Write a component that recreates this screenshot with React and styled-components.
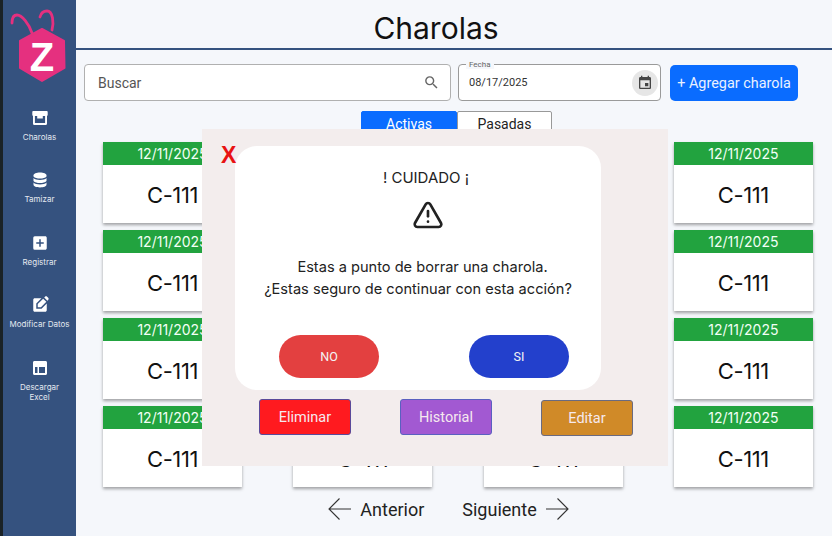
import React from "react";
import styled, { createGlobalStyle } from "styled-components";
import { MdSearch, MdEvent, MdAddBox, MdEditSquare } from "react-icons/md";
import { TriangleAlert } from "lucide-react";

const GlobalStyle = createGlobalStyle`
  html, body {
    margin: 0;
    height: 100%;
    overflow: hidden;
    background: #f5f7fb;
    font-family: "Roboto", "Liberation Sans", sans-serif;
  }
  * { box-sizing: border-box; }
`;

const Page = styled.div`
  position: relative;
  display: flex;
  width: 832px;
  height: 536px;
  overflow: hidden;
`;

const Sidebar = styled.aside`
  width: 76px;
  flex: none;
  display: flex;
  flex-direction: column;
  align-items: center;
  background: #35527f;
  border-left: 3px solid #1a2226;
  padding-top: 9px;
`;

const LogoBox = styled.svg`
  width: 76px;
  height: 76px;
  margin-left: -3px;
  flex: none;
`;

const NavList = styled.nav`
  display: flex;
  flex-direction: column;
  margin-top: 24px;
  width: 100%;
`;

const NavItem = styled.div`
  height: 62.4px;
  display: flex;
  flex-direction: column;
  align-items: center;
  color: #fff;
  svg { flex: none; }
`;

const NavLabel = styled.span`
  margin-top: 5px;
  font-family: "Inter", sans-serif;
  font-size: 8px;
  line-height: 10.5px;
  text-align: center;
  color: #e4e9f0;
`;

const Main = styled.main`
  flex: 1;
  display: flex;
  flex-direction: column;
  min-width: 0;
`;

const Title = styled.h1`
  margin: 0;
  height: 50px;
  padding: 9px 36px 0 0;
  border-bottom: 2px solid #35527f;
  font-family: "Inter", sans-serif;
  font-size: 30px;
  line-height: 38px;
  font-weight: 400;
  text-align: center;
  color: #111;
`;

const Toolbar = styled.div`
  display: flex;
  gap: 7px;
  padding: 14px 0 0 8px;
  align-items: flex-start;
`;

const SearchField = styled.div`
  width: 367px;
  height: 37px;
  display: flex;
  align-items: center;
  justify-content: space-between;
  padding: 0 10px 0 13px;
  background: #fff;
  border: 1px solid #b0b0b0;
  border-radius: 4px;
  font-size: 14px;
  color: #555;
  svg { color: #666; }
`;

const DateField = styled.div`
  position: relative;
  width: 203px;
  height: 37px;
  display: flex;
  align-items: center;
  justify-content: space-between;
  padding: 0 2px 0 10px;
  border: 1px solid #9a9a9a;
  border-radius: 4px;
  background: #fff;
  font-size: 11px;
  color: #333;
`;

const DateLegend = styled.span`
  position: absolute;
  top: -5px;
  left: 7px;
  padding: 0 3px;
  background: #f5f7fb;
  font-size: 8px;
  line-height: 9px;
  color: #666;
`;

const CalendarButton = styled.span`
  width: 26px;
  height: 26px;
  display: flex;
  align-items: center;
  justify-content: center;
  border-radius: 50%;
  background: #e6e6e6;
  color: #444;
`;

const AddButton = styled.button`
  width: 128px;
  height: 36px;
  margin: 1px 0 0 2px;
  padding: 0;
  border: none;
  border-radius: 5px;
  background: #0a6cff;
  color: #e9f1ff;
  font-family: inherit;
  font-size: 14.4px;
`;

const Tabs = styled.div`
  display: flex;
  margin: 10px 0 0 285px;
`;

const Tab = styled.button`
  width: ${(p) => (p.$active ? 96 : 95)}px;
  height: 30px;
  padding: 0 0 4px;
  border: 1px solid ${(p) => (p.$active ? "#0a6cff" : "#999")};
  border-radius: 2px 2px 0 0;
  background: ${(p) => (p.$active ? "#0a6cff" : "#fff")};
  color: ${(p) => (p.$active ? "#fff" : "#222")};
  font-family: inherit;
  font-size: 14px;
`;

const CardGrid = styled.div`
  display: grid;
  grid-template-columns: repeat(4, 139px);
  grid-auto-rows: 81px;
  column-gap: 51.3px;
  row-gap: 7px;
  margin: 1px 0 0 27px;
`;

const Card = styled.div`
  display: flex;
  flex-direction: column;
  background: #fff;
  box-shadow: 0 2px 3px rgba(0, 0, 0, 0.35);
`;

const CardDate = styled.div`
  height: 23px;
  background: #22a33f;
  color: #f2fff5;
  font-family: "Inter", sans-serif;
  font-size: 14px;
  line-height: 23px;
  text-align: center;
`;

const CardCode = styled.div`
  flex: 1;
  display: flex;
  align-items: center;
  justify-content: center;
  padding-top: 2px;
  font-family: "Inter", sans-serif;
  font-size: 22px;
  letter-spacing: -0.4px;
  color: #111;
`;

const Pager = styled.div`
  display: flex;
  justify-content: center;
  align-items: center;
  gap: 38px;
  margin: 10px 0 0 -11px;
  font-size: 18px;
  color: #222;
`;

const PagerLink = styled.span`
  display: flex;
  align-items: center;
  gap: 8px;
`;

const Overlay = styled.div`
  position: absolute;
  left: 202px;
  top: 129px;
  width: 466px;
  height: 337px;
  padding: 17px 0 0 33px;
  background: #f3eded;
`;

const CloseMark = styled.span`
  position: absolute;
  left: 19px;
  top: 12px;
  font-family: "Liberation Sans", sans-serif;
  font-size: 23px;
  font-weight: 700;
  line-height: 28px;
  color: #e81212;
`;

const Dialog = styled.div`
  width: 366px;
  height: 244px;
  display: flex;
  flex-direction: column;
  align-items: center;
  padding-top: 23px;
  background: #fff;
  border-radius: 22px;
  font-family: "Inter", sans-serif;
  color: #222;
`;

const DialogTitle = styled.div`
  margin-left: 16px;
  font-size: 15px;
  line-height: 18px;
`;

const DialogIcon = styled(TriangleAlert)`
  margin: 12px 0 0 20px;
`;

const DialogText = styled.p`
  margin: 25px 0 0;
  font-size: 14.6px;
  line-height: 22px;
  text-align: center;
`;

const LeadLine = styled.span`
  padding-left: 9px;
`;

const DialogActions = styled.div`
  display: flex;
  gap: 90px;
  margin: 35px 0 0 12px;
`;

const PillButton = styled.button`
  width: 100px;
  height: 43px;
  border: none;
  border-radius: 22px;
  background: ${(p) => p.$bg};
  color: #f4f4f4;
  font-family: "Roboto", sans-serif;
  font-size: 12.5px;
`;

const ActionRow = styled.div`
  display: flex;
  gap: 49px;
  margin: 9px 0 0 24px;
`;

const ActionButton = styled.button`
  width: 92px;
  height: 36px;
  margin-top: ${(p) => p.$drop || 0}px;
  padding: 0;
  border: 1px solid ${(p) => p.$border};
  border-radius: 3px;
  background: ${(p) => p.$bg};
  color: #f6e9ee;
  font-family: "Roboto", sans-serif;
  font-size: 14.5px;
`;

const ArchiveIcon = () => (
  <svg width="18" height="18" viewBox="0 0 18 18" fill="currentColor">
    <path fillRule="evenodd" d="M2.500 2h13c.8 0 1.200.6 1.200 1.200v2.600c0 .6-.3 1-.7 1.200v7.500c0 1-.8 1.500-1.600 1.500H3.600C2.800 16 2 15.500 2 14.500V7c-.4-.2-.7-.6-.7-1.200V3.200C1.300 2.600 1.700 2 2.500 2zM3.900 7v6.900h10.200V7h-2.300v2.600H6.200V7z" />
  </svg>
);

const DatabaseIcon = () => (
  <svg width="18" height="18" viewBox="0 0 18 18" fill="currentColor">
    <path d="M9 1.500c3.600 0 6.500 1.100 6.500 2.900v1.100C14.300 7 11.700 7.500 9 7.500s-5.300-.5-6.500-2V4.400C2.500 2.600 5.400 1.500 9 1.500z" />
    <path d="M2.500 7C3.800 8.400 6.300 8.900 9 8.900s5.200-.5 6.500-1.900v3.100C14.300 11.600 11.700 12.100 9 12.100s-5.300-.5-6.500-2z" />
    <path d="M2.500 11.600c1.300 1.400 3.800 1.900 6.500 1.900s5.200-.5 6.500-1.900v2c0 1.800-2.900 2.900-6.500 2.900s-6.500-1.100-6.500-2.900z" />
  </svg>
);

const LayoutIcon = () => (
  <svg width="18" height="18" viewBox="0 0 18 18" fill="currentColor">
    <path fillRule="evenodd" d="M3.500 2h11C15.400 2 16 2.700 16 3.500v11c0 .8-.6 1.500-1.500 1.500h-11C2.600 16 2 15.300 2 14.500v-11C2 2.700 2.600 2 3.500 2zM4 8v6h2.500V8zM8 8v6h6V8z" />
  </svg>
);

const ArrowIcon = ({ flip }) => (
  <svg width="24" height="24" viewBox="0 0 24 24" fill="none" stroke="#333" strokeWidth="1.100" style={flip ? { transform: "scaleX(-1)" } : undefined}>
    <path d="M23 12H1.500M11.500 1.500 1 12l10.500 10.500" />
  </svg>
);

const Logo = () => (
  <LogoBox viewBox="0 0 76 76">
    <path d="M32 24C29 15 22 6 17 6 13 6 12 10 12 14" fill="none" stroke="#e5307f" strokeWidth="2.800" strokeLinecap="round" />
    <path d="M52 21C54 14 53 2 47 2 43 2 41 4 40 8" fill="none" stroke="#e5307f" strokeWidth="2.800" strokeLinecap="round" />
    <path d="M42 20 64 32 64.500 59 42 72 20 59 20 32z" fill="#e5307f" stroke="#e5307f" strokeWidth="2" strokeLinejoin="round" />
    <text x="42" y="62" textAnchor="middle" fontFamily="Liberation Sans, sans-serif" fontWeight="700" fontSize="40" fill="#fff">Z</text>
  </LogoBox>
);

const navItems = [
  { icon: <ArchiveIcon />, label: "Charolas" },
  { icon: <DatabaseIcon />, label: "Tamizar" },
  { icon: <MdAddBox size={18} />, label: "Registrar" },
  { icon: <MdEditSquare size={18} />, label: "Modificar Datos" },
  { icon: <LayoutIcon />, label: <>Descargar<br />Excel</> },
];

const cards = Array.from({ length: 16 }, (_, i) => i);

export default function App() {
  return (
    <Page>
      <GlobalStyle />
      <Sidebar>
        <Logo />
        <NavList>
          {navItems.map((item, i) => (
            <NavItem key={i}>
              {item.icon}
              <NavLabel>{item.label}</NavLabel>
            </NavItem>
          ))}
        </NavList>
      </Sidebar>
      <Main>
        <Title>Charolas</Title>
        <Toolbar>
          <SearchField>
            Buscar
            <MdSearch size={17} />
          </SearchField>
          <DateField>
            <DateLegend>Fecha</DateLegend>
            08/17/2025
            <CalendarButton>
              <MdEvent size={16} />
            </CalendarButton>
          </DateField>
          <AddButton>+ Agregar charola</AddButton>
        </Toolbar>
        <Tabs>
          <Tab $active>Activas</Tab>
          <Tab>Pasadas</Tab>
        </Tabs>
        <CardGrid>
          {cards.map((i) => (
            <Card key={i}>
              <CardDate>12/11/2025</CardDate>
              <CardCode>C-111</CardCode>
            </Card>
          ))}
        </CardGrid>
        <Pager>
          <PagerLink>
            <ArrowIcon />
            Anterior
          </PagerLink>
          <PagerLink>
            Siguiente
            <ArrowIcon flip />
          </PagerLink>
        </Pager>
      </Main>
      <Overlay>
        <CloseMark>X</CloseMark>
        <Dialog>
          <DialogTitle>! CUIDADO ¡</DialogTitle>
          <DialogIcon size={32} strokeWidth={2} color="#222" />
          <DialogText>
            <LeadLine>Estas a punto de borrar una charola.</LeadLine>
            <br />
            ¿Estas seguro de continuar con esta acción?
          </DialogText>
          <DialogActions>
            <PillButton $bg="#e34040">NO</PillButton>
            <PillButton $bg="#2340cc">SI</PillButton>
          </DialogActions>
        </Dialog>
        <ActionRow>
          <ActionButton $bg="#ff1a1f" $border="#5a4a9a">Eliminar</ActionButton>
          <ActionButton $bg="#a259d2" $border="#5a60c0">Historial</ActionButton>
          <ActionButton $bg="#d08a28" $border="#6a6a80" $drop={1}>Editar</ActionButton>
        </ActionRow>
      </Overlay>
    </Page>
  );
}
